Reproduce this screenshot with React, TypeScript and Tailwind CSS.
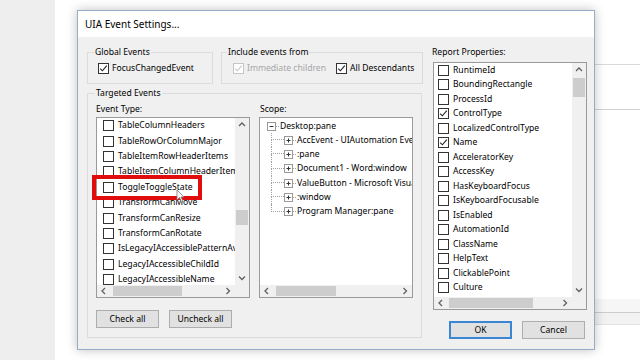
import React from "react"

const eventTypes = [
  "TableColumnHeaders",
  "TableRowOrColumnMajor",
  "TableItemRowHeaderItems",
  "TableItemColumnHeaderItems",
  "ToggleToggleState",
  "TransformCanMove",
  "TransformCanResize",
  "TransformCanRotate",
  "IsLegacyIAccessiblePatternAvailable",
  "LegacyIAccessibleChildId",
  "LegacyIAccessibleName",
  "LegacyIAccessibleValue",
]

const scopeChildren = [
  "AccEvent - UIAutomation Event Watcher",
  ":pane",
  "Document1 - Word:window",
  "ValueButton - Microsoft Visual Studio",
  ":window",
  "Program Manager:pane",
]

const properties = [
  { name: "RuntimeId" },
  { name: "BoundingRectangle" },
  { name: "ProcessId" },
  { name: "ControlType", checked: true },
  { name: "LocalizedControlType" },
  { name: "Name", checked: true },
  { name: "AcceleratorKey" },
  { name: "AccessKey" },
  { name: "HasKeyboardFocus" },
  { name: "IsKeyboardFocusable" },
  { name: "IsEnabled" },
  { name: "AutomationId" },
  { name: "ClassName" },
  { name: "HelpText" },
  { name: "ClickablePoint" },
  { name: "Culture" },
  { name: "IsControlElement" },
]

function Check({ checked, disabled }: { checked?: boolean; disabled?: boolean }) {
  return (
    <span
      className={`flex h-[11px] w-[11px] shrink-0 items-center justify-center border bg-white ${
        disabled ? "border-[#c6c6c6]" : "border-[#333333]"
      }`}
    >
      {checked && (
        <svg width="9" height="9" viewBox="0 0 9 9">
          <path
            d="M1.2 4.6 L3.4 6.8 L7.8 1.6"
            fill="none"
            stroke={disabled ? "#c6c6c6" : "#222222"}
            strokeWidth="1.1"
          />
        </svg>
      )}
    </span>
  )
}

function Arrow({ dir }: { dir: "up" | "down" | "left" | "right" }) {
  const d = {
    up: "M1 5 L4 2 L7 5",
    down: "M1 2.5 L4 5.5 L7 2.5",
    left: "M5 1 L2 4 L5 7",
    right: "M2.5 1 L5.5 4 L2.5 7",
  }[dir]
  return (
    <svg width="8" height="8" viewBox="0 0 8 8">
      <path d={d} fill="none" stroke="#606060" strokeWidth="1.3" />
    </svg>
  )
}

function VScroll({ thumb }: { thumb: string }) {
  return (
    <div className="flex w-[14px] shrink-0 flex-col bg-[#f0f0f0]">
      <div className="flex h-[14px] shrink-0 items-center justify-center">
        <Arrow dir="up" />
      </div>
      <div className="min-h-0 flex-1 px-[1px]">
        <div className={`bg-[#cdcdcd] ${thumb}`} />
      </div>
      <div className="flex h-[14px] shrink-0 items-center justify-center">
        <Arrow dir="down" />
      </div>
    </div>
  )
}

function HScroll({ thumb, corner }: { thumb: string; corner?: boolean }) {
  return (
    <div className="flex h-[12px] shrink-0">
      <div className="flex flex-1 bg-[#f0f0f0]">
        <div className="flex w-[14px] shrink-0 items-center justify-center">
          <Arrow dir="left" />
        </div>
        <div className="flex-1 py-[1px]">
          <div className={`h-full bg-[#cdcdcd] ${thumb}`} />
        </div>
        <div className="flex w-[14px] shrink-0 items-center justify-center">
          <Arrow dir="right" />
        </div>
      </div>
      {corner && <div className="w-[14px] shrink-0 bg-[#f0f0f0]" />}
    </div>
  )
}

function TreeBox({ sign }: { sign: "plus" | "minus" }) {
  return (
    <svg width="9" height="9" viewBox="0 0 9 9" className="shrink-0">
      <rect x="0.5" y="0.5" width="8" height="8" fill="#ffffff" stroke="#9a9a9a" />
      <path d="M2.5 4.5 H6.5" stroke="#333333" />
      {sign === "plus" && <path d="M4.5 2.5 V6.5" stroke="#333333" />}
    </svg>
  )
}

function Button({ label, primary }: { label: string; primary?: boolean }) {
  return (
    <div
      className={`flex h-[18px] w-[63px] items-center justify-center bg-[#e1e1e1] ${
        primary ? "border-2 border-[#3a86d2]" : "border border-[#adadad]"
      }`}
    >
      {label}
    </div>
  )
}

export default function App() {
  return (
    <div className="relative flex h-[360px] w-[640px] overflow-hidden bg-white font-['Noto_Sans',sans-serif] text-[8.6px] leading-[13px] text-black">
      {/* desktop behind the dialog */}
      <div className="w-[55px] shrink-0 bg-[#eeeeee]" />
      <div className="w-[535px] shrink-0" />
      <div className="flex flex-1 flex-col">
        <div className="h-[65px] border-b border-[#d9d9d9]" />
        <div className="h-[45px] border-b border-[#d2d2d2]" />
        <div className="h-[189px]" />
        <div className="h-[14px] border-b border-[#cccccc] bg-[#f6f6f6]" />
        <div className="h-[12px] border-b border-[#e2e2e2] bg-[#f2f2f2]" />
      </div>

      {/* dialog */}
      <div className="absolute left-[77px] top-[10px] flex h-[340px] w-[518px] flex-col border border-[#93aec6] bg-[#f0f0f0] shadow-[0_0_10px_rgba(0,0,0,0.25)]">
        <div className="flex h-[26px] shrink-0 items-center bg-white pl-[7px] text-[10px]">
          UIA Event Settings...
        </div>

        <div className="flex flex-1 gap-[9px] pl-[9px]">
          {/* left column */}
          <div className="flex w-[336px] flex-col pt-[9px]">
            <div className="flex gap-[8px]">
              <fieldset className="h-[38px] w-[126px] border border-[#dcdcdc] pl-[6px]">
                <legend className="px-[1px]">Global Events</legend>
                <div className="flex items-center gap-[3px] whitespace-nowrap pl-[4px] pt-[3px]">
                  <Check checked />
                  <span>FocusChangedEvent</span>
                </div>
              </fieldset>
              <fieldset className="h-[38px] w-[202px] border border-[#dcdcdc] pl-[5px]">
                <legend className="px-[1px]">Include events from</legend>
                <div className="flex items-center whitespace-nowrap pl-[6px] pt-[3px]">
                  <Check checked disabled />
                  <span className="ml-[3px] text-[#a6a6a6]">Immediate children</span>
                  <span className="ml-[10px]">
                    <Check checked />
                  </span>
                  <span className="ml-[3px]">All Descendants</span>
                </div>
              </fieldset>
            </div>

            <fieldset className="mt-[3px] h-[251px] w-[335px] border border-[#dcdcdc] px-[8px]">
              <legend className="-ml-[1px] px-[1px]">Targeted Events</legend>
              <div className="flex gap-[9px] pt-[3px]">
                <div className="flex w-[154px] flex-col">
                  <div className="h-[13px]">Event Type:</div>
                  <div className="relative mt-[1px]">
                    <div className="flex h-[181px] flex-col border border-[#9a9a9a] bg-white">
                      <div className="flex min-h-0 flex-1">
                        <div className="min-w-0 flex-1 overflow-hidden pl-[6px]">
                          {eventTypes.map((name) => (
                            <div key={name} className="flex h-[15.4px] items-center gap-[4px] whitespace-nowrap">
                              <Check />
                              <span>{name}</span>
                            </div>
                          ))}
                        </div>
                        <VScroll thumb="mt-[78px] h-[15px]" />
                      </div>
                      <HScroll thumb="ml-[2px] w-[69px] flex-none" corner />
                    </div>
                    <div className="absolute -left-[4px] top-[58px] h-[25px] w-[110px] border-4 border-[#e10d0d]" />
                    <svg
                      className="absolute left-[80px] top-[72px]"
                      width="9"
                      height="14"
                      viewBox="0 0 9 14"
                    >
                      <path d="M1 1 V11 L3.5 8.5 L5.5 13 L7 12.3 L5 8 H8 Z" fill="#ffffff" stroke="#777777" strokeWidth="0.8" />
                    </svg>
                  </div>
                </div>

                <div className="flex w-[154px] flex-col">
                  <div className="h-[13px] pl-[1px]">Scope:</div>
                  <div className="mt-[1px] flex h-[181px] flex-col border border-[#9a9a9a] bg-white">
                    <div className="min-h-0 flex-1 overflow-hidden pt-[1px]">
                      <div className="flex h-[14px] items-center whitespace-nowrap pl-[7px]">
                        <TreeBox sign="minus" />
                        <span className="w-[3px] border-t border-dotted border-[#a0a0a0]" />
                        <span className="ml-[1px]">Desktop:pane</span>
                      </div>
                      {scopeChildren.map((name, i) => (
                        <div key={name} className="flex h-[14.3px] items-center whitespace-nowrap">
                          <div className="w-[11px] shrink-0" />
                          <div className="flex h-full w-[13px] shrink-0 flex-col">
                            <div className="h-1/2 border-b border-l border-dotted border-[#a0a0a0]" />
                            <div
                              className={`h-1/2 border-dotted border-[#a0a0a0] ${
                                i < scopeChildren.length - 1 ? "border-l" : ""
                              }`}
                            />
                          </div>
                          <TreeBox sign="plus" />
                          <span className="w-[3px] shrink-0 border-t border-dotted border-[#a0a0a0]" />
                          <span className="ml-[1px]">{name}</span>
                        </div>
                      ))}
                    </div>
                    <HScroll thumb="ml-[2px] w-[60px] flex-none" />
                  </div>
                </div>
              </div>

              <div className="mt-[12px] flex gap-[10px]">
                <Button label="Check all" />
                <Button label="Uncheck all" />
              </div>
            </fieldset>
          </div>

          {/* right column */}
          <div className="flex w-[155px] flex-col pt-[9px]">
            <div className="h-[13px]">Report Properties:</div>
            <div className="ml-[1px] mt-[3px] flex h-[248px] flex-col border border-[#9a9a9a] bg-white">
              <div className="flex min-h-0 flex-1">
                <div className="min-w-0 flex-1 overflow-hidden pl-[4px]">
                  {properties.map((p) => (
                    <div key={p.name} className="flex h-[14.5px] items-center gap-[4px] whitespace-nowrap">
                      <Check checked={p.checked} />
                      <span>{p.name}</span>
                    </div>
                  ))}
                </div>
                <VScroll thumb="mt-[1px] h-[19px]" />
              </div>
              <HScroll thumb="ml-[1px] w-[84px] flex-none" corner />
            </div>
            <div className="mt-[11px] flex justify-end gap-[10px] pr-[2px]">
              <Button label="OK" primary />
              <Button label="Cancel" />
            </div>
          </div>
        </div>
      </div>
    </div>
  )
}
